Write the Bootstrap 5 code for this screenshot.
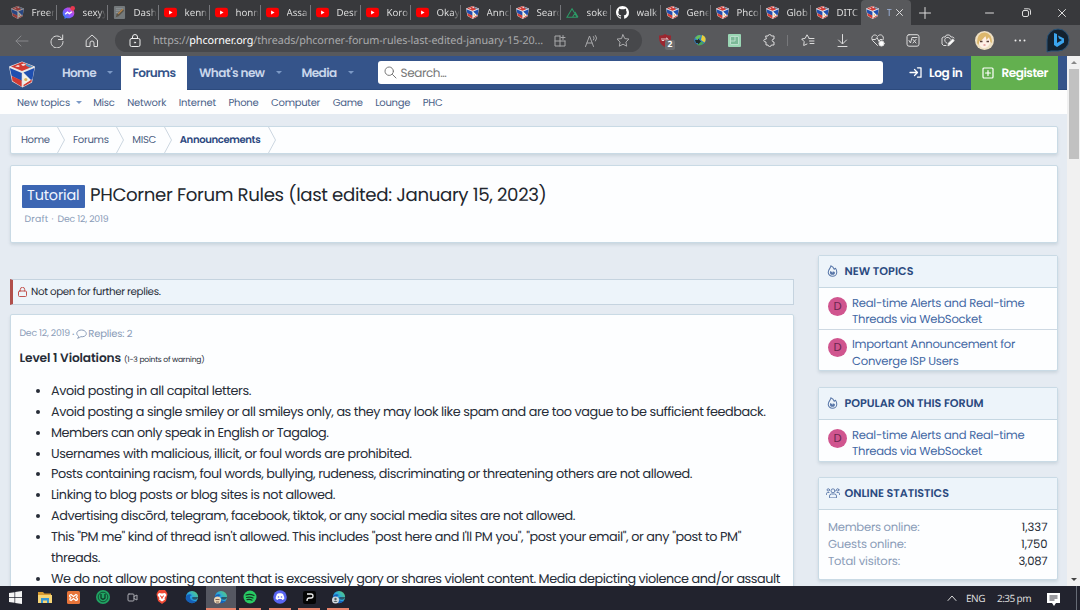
<!DOCTYPE html>
<html lang="en">
<head>
<meta charset="utf-8">
<title>PHCorner Forum Rules</title>
<meta name="viewport" content="width=device-width, initial-scale=1">
<link href="https://cdn.jsdelivr.net/npm/bootstrap@5.3.0/dist/css/bootstrap.min.css" rel="stylesheet">
<style>
html,body{height:100%;overflow:hidden}
body{font-family:Poppins,Inter,"Open Sans",sans-serif;font-feature-settings:"cv11";font-size:11px;line-height:16px;color:#272d38;background:#e5ebf2;text-rendering:geometricPrecision}
svg{display:block;flex:none}
.stroke{fill:none;stroke:currentColor;stroke-linecap:round;stroke-linejoin:round}
[data-w]{white-space:nowrap;display:inline-block}
.desk{height:610px}
/* browser chrome */
.chrome{font-family:"Segoe UI","Noto Sans","Open Sans",sans-serif;font-feature-settings:normal;color:#dcdcdc}
.tabstrip{height:25px;background:#38393c;padding-left:5.5px}
.btab{width:50px;height:25px;position:relative;padding-left:5px}
.btab.w51{width:51px}
.btab svg{width:13px;height:13px}
.btab .ttl{margin-left:8px;width:24px;white-space:nowrap;font-size:9.7px;line-height:20px;-webkit-mask-image:linear-gradient(90deg,#000 65%,transparent 95%);mask-image:linear-gradient(90deg,#000 65%,transparent 95%)}
.btab::after{content:"";position:absolute;right:0;top:5px;height:15px;width:1px;background:#75767a}
.btab.live{background:#58595c;border-radius:4px 4px 0 0}
.btab.live::after,.btab.noline::after{display:none}
.btab.live .ttl{width:6px;color:#9bb0d8}
.toolbar{height:31px;background:#58595c;padding-left:4.5px;padding-bottom:0}
.slot{width:35px;display:flex;justify-content:center;flex:none;position:relative}
.slot.s31{width:31.5px;color:#a9a9ab}
.urlbox{width:527px;height:23px;border-radius:12px;background:#47484b;margin-left:5.5px;margin-right:5px;color:#a9aaac;font-size:10.8px}
.urlbox b{color:#fff;font-weight:400}
.cnt{position:absolute;left:18px;top:6px;width:10px;height:10px;background:#6c6d70;border-radius:2px;font-size:8.5px;line-height:10px;text-align:center;color:#fff;font-weight:700}
/* site */
.site{width:1067px}
.sitenav{height:34px;background:#35548a;color:#c9d6ea;font-weight:600;font-size:12.1px;border-bottom:1px solid #2c4a7d}
.sitenav span{padding-top:2px}
.caret{width:0;height:0;border:3px solid transparent;border-top:3.5px solid #7c99c6;border-bottom:0;flex:none}
.navon{background:#fff;color:#35548a;height:34px;width:66px;margin-left:8px}
.find{width:505px;height:23px;background:#fff;border-radius:3px;color:#777;font-weight:400;font-size:12px;padding-left:5.5px;margin-left:24.5px}
.reg{background:#63b04f;color:#fff;height:34px;width:87px;margin-left:8.5px;padding-left:11px}
.subnav{height:24px;background:#fefefe;color:#4a6188;font-size:10px;padding-left:17px;padding-top:1px;gap:12.6px}
.sheet{background:#fdfeff;border:1px solid #c9dae5;border-radius:2px;box-shadow:0 2px 3px rgba(90,110,130,.17)}
.crumbs{margin:12px 9px 0 9.5px;height:28px;font-size:10.1px;color:#4a5c80}
.crumbs svg{margin:0 7.8px}
.titlebox{margin:11px 9px 0 9.5px;height:78px;padding:18px 12px 0 11.5px}
.titlebox h1{font-size:18.2px;line-height:24px;font-weight:400;margin:0;color:#22272e}
.tutorial{background:#3c66b3;color:#f0f5ff;font-size:14.4px;line-height:23px;height:23px;padding:0 5px;margin-right:5px;border-radius:1px;margin-top:1px;width:63px}
.dim{color:#8a9cb8}
.notice{height:26px;background:#edf4fa;border:1px solid #c5d3df;border-left:3px solid #b1504c;font-size:10.3px;padding-left:5.5px;margin-top:36px}
.post{margin-top:9px;height:300px;padding:10.5px 9px}
.rules{font-size:12.8px;line-height:20.85px;padding-left:31.5px;margin:14px 0 0}
.rules li::marker{font-size:12px}
.rules span{vertical-align:top}
.maincol{width:784.5px;margin-left:9.5px}
.aside-col{width:240px;margin-left:24px;padding-top:12px}
.hd{height:32px;background:#edf4fa;border-bottom:1px solid #c6d7e2;color:#2b4a80;font-weight:600;font-size:11.2px;padding-left:8px;padding-bottom:1px}
.hd svg{color:#5876a8}
.topic{height:41px;padding:6.5px 0 0 9px;color:#4468a4;font-size:11.6px;line-height:16.6px}
.topic>div{padding-top:1px}
.topic+.topic{border-top:1px solid #ced9e3;padding-top:6px}
.topic span[data-w]{vertical-align:top}
.ava{width:19px;height:19px;border-radius:50%;background:#d0558f;color:#6a2750;font-size:11.5px;line-height:20px;text-align:center;margin:2px 5px 0 0;flex:none}
.stat{font-size:11.6px;line-height:16.9px}
.scroller{width:13px;background:#f1f1f1}
.thumb{height:90px;width:10px;background:#c1c1c1}
/* taskbar */
.task{height:24px;background:#22232e;padding-left:.5px}
.app{width:29.4px;height:24px;display:flex;align-items:center;justify-content:center;border-bottom:2px solid transparent;flex:none}
.app.run{background:linear-gradient(#e8836b,#e8836b) center 22px/22px 2px no-repeat border-box}
.app.now{background:#555761;border-bottom-color:#e8836b}
</style>
</head>
<body>
<svg width="0" height="0" class="position-absolute">
<defs>
<linearGradient id="msg" x1="0" y1="1" x2="1" y2="0"><stop offset="0" stop-color="#1a8cff"/><stop offset=".6" stop-color="#a24bfa"/><stop offset="1" stop-color="#ff5c7a"/></linearGradient>
<linearGradient id="edg" x1="0" y1="1" x2="1" y2="0"><stop offset="0" stop-color="#1259b8"/><stop offset=".5" stop-color="#2aa7e0"/><stop offset="1" stop-color="#5fd36a"/></linearGradient>
</defs>
<symbol id="cube" viewBox="0 0 26 26"><path fill="#e9e6e6" d="M0 5 13 0l13 5-3 16-9.500 5L3 20z"/><path fill="#d23a33" d="m2 5 11-4.500L24 5 13 9.500z"/><path fill="#f1e4e4" d="m6 5 3-1.500 2 1-1.500 1zM12 3l3-1 2 1.300-3 1.200z"/><path fill="#4a9ccc" d="m17 2.200 7 2.800-3 1.200-4-2z"/><path fill="#1f4fb0" d="m.8 6.500 12 5-.1 8L2.700 14.500z"/><path fill="#d23a33" d="M2.700 14.500 12.700 19v6.200L3.500 19.500z"/><path fill="#1f4fb0" d="M25.300 6.500 14.500 11l7.500 7.500 1.500-1z"/><path fill="#d23a33" d="m22.800 18-.3 2.500-8 4.500v-2z"/><path fill="#f3f0e8" d="M14.300 12 21.500 18.500l-7.200 5z"/><circle cx="16.800" cy="18" r="1.600" fill="#d9b15a"/></symbol>
<symbol id="yt" viewBox="0 0 14 14"><rect y="2" width="14" height="10" rx="2.500" fill="#f00"/><path fill="#fff" d="M5.500 4.800v4.400L9.200 7z"/></symbol>
<symbol id="msgr" viewBox="0 0 14 14"><path fill="url(#msg)" d="M7 1.500c-3.800 0-6.300 2.600-6.300 6 0 2 .8 3.400 2 4.400V14l2-1.100c4.800 1.200 8.600-1.700 8.600-5.400 0-3.400-2.500-6-6.300-6z"/><path d="m3.500 9 2.400-2.400L8 8.200l2.600-2" stroke="#fff" stroke-width="1.500" fill="none"/><circle cx="11.500" cy="2.500" r="2.500" fill="#e8384f"/></symbol>
<symbol id="dash" viewBox="0 0 14 14"><rect x="1" width="12" height="14" rx="1" fill="#74797b"/><path d="M3 3h8M3 5h6M3 7h4" stroke="#989fa0" stroke-width=".8"/><path d="m3 12 1-3 6-6 2 2-6 6z" fill="#59544a"/><path d="m5 8 5-5 1 1-5 5z" fill="#b98548"/></symbol>
<symbol id="nuxt" viewBox="0 0 14 14"><path d="M1 12 6.500 3l5.500 9zM7 12l3-5 3 5" fill="none" stroke="#2c9a66" stroke-width="1.100"/></symbol>
<symbol id="gh" viewBox="0 0 16 16"><path fill="#fff" d="M8 0C3.580 0 0 3.580 0 8c0 3.540 2.290 6.530 5.470 7.590.4.070.55-.17.55-.38v-1.490c-2.010.37-2.530-.49-2.690-.94-.09-.23-.48-.94-.82-1.130-.28-.15-.68-.52-.01-.53.63-.01 1.080.58 1.230.82.72 1.210 1.870.87 2.330.66.070-.52.280-.87.510-1.070-1.780-.2-3.640-.89-3.640-3.950 0-.87.310-1.590.820-2.150-.08-.2-.36-1.020.08-2.120 0 0 .67-.21 2.200.82a7.600 7.600 0 0 1 4 0c1.530-1.040 2.200-.82 2.200-.82.440 1.100.160 1.920.080 2.120.51.560.820 1.270.820 2.150 0 3.070-1.870 3.750-3.650 3.950.29.250.54.730.54 1.480v2.200c0 .21.150.46.550.38A8 8 0 0 0 16 8c0-4.420-3.580-8-8-8z"/></symbol>
<symbol id="edge" viewBox="0 0 16 16"><circle cx="8" cy="8" r="7" fill="url(#edg)"/><path d="M1 8c1-3 5-4 7-2-2 0-3 2-2 4s4 3.500 7.500 2c-2 3.500-7 4-10 1.500S.6 10 1 8z" fill="#1560b8"/><path d="M8.500 8c-1 1.200 0 3.200 3 3.200 1.500 0 3-1.200 3.500-3.200H10z" fill="#22232e" opacity=".6"/></symbol>
<symbol id="flame" viewBox="0 0 12 14"><path class="stroke" stroke-width="1.200" d="M4 1C4.500 3 1 5 1 8.500a5 4.700 0 0 0 10 0C11 6.500 10.500 5 9.500 3.800L8 5C7.500 3.500 5.500 1.500 4 1z"/><path fill="currentColor" d="M6 11.500a3 2.800 0 0 1-3-3q0-1 1-1.500l2 2 .5-2L8 8.500l.7-1q.8 4-2.700 4z"/></symbol>
</svg>
<div class="desk d-flex flex-column overflow-hidden">
<div class="chrome">
<div class="tabstrip d-flex">
<div class="btab w51 d-flex align-items-center"><svg opacity=".6"><use href="#cube"/></svg><span class="ttl">Freer</span></div>
<div class="btab w51 d-flex align-items-center"><svg><use href="#msgr"/></svg><span class="ttl">sexyy</span></div>
<div class="btab w51 d-flex align-items-center"><svg><use href="#dash"/></svg><span class="ttl">Dash</span></div>
<div class="btab w51 d-flex align-items-center"><svg><use href="#yt"/></svg><span class="ttl">kenn</span></div>
<div class="btab w51 d-flex align-items-center"><svg><use href="#yt"/></svg><span class="ttl">honn</span></div>
<div class="btab d-flex align-items-center"><svg><use href="#yt"/></svg><span class="ttl">Assa</span></div>
<div class="btab d-flex align-items-center"><svg><use href="#yt"/></svg><span class="ttl">Desr</span></div>
<div class="btab d-flex align-items-center"><svg><use href="#yt"/></svg><span class="ttl">Koro</span></div>
<div class="btab d-flex align-items-center"><svg><use href="#yt"/></svg><span class="ttl">Okay</span></div>
<div class="btab d-flex align-items-center"><svg><use href="#cube"/></svg><span class="ttl">Annc</span></div>
<div class="btab d-flex align-items-center"><svg><use href="#cube"/></svg><span class="ttl">Searc</span></div>
<div class="btab d-flex align-items-center"><svg><use href="#nuxt"/></svg><span class="ttl">soke</span></div>
<div class="btab d-flex align-items-center"><svg><use href="#gh"/></svg><span class="ttl">walk</span></div>
<div class="btab d-flex align-items-center"><svg><use href="#cube"/></svg><span class="ttl">Gene</span></div>
<div class="btab d-flex align-items-center"><svg><use href="#cube"/></svg><span class="ttl">Phco</span></div>
<div class="btab d-flex align-items-center"><svg><use href="#cube"/></svg><span class="ttl">Glob</span></div>
<div class="btab noline d-flex align-items-center"><svg><use href="#cube"/></svg><span class="ttl">DITC</span></div>
<div class="btab live d-flex align-items-center"><svg><use href="#cube"/></svg><span class="ttl">T</span><svg class="stroke" style="width:7px;height:7px;margin-left:3px" viewBox="0 0 7 7"><path d="m.5.5 6 6m0-6-6 6"/></svg></div>
<div class="d-flex align-items-center ps-2"><svg class="stroke" width="12" height="12" viewBox="0 0 12 12"><path d="M6 .5v11M.5 6h11"/></svg></div>
<div class="d-flex align-items-center ms-auto" style="gap:27.5px;padding-right:14px"><svg class="stroke" width="9" height="9" viewBox="0 0 9 9"><path d="M.5 5h8"/></svg><svg class="stroke" width="9" height="9" viewBox="0 0 9 9"><rect x=".5" y="2.500" width="6" height="6" rx="1.500"/><path d="M2.500.8h4a2 2 0 0 1 2 2v3.500"/></svg><svg class="stroke" width="8" height="8" viewBox="0 0 8 8"><path d="m.5.5 7 7m0-7-7 7"/></svg></div>
</div>
<div class="toolbar d-flex align-items-center">
<div class="slot" style="color:#87888b"><svg class="stroke" width="14" height="12" viewBox="0 0 14 12"><path d="M13 6H1m5-5L1 6l5 5"/></svg></div>
<div class="slot"><svg class="stroke" width="14" height="14" viewBox="0 0 14 14"><path d="M12.500 5.500a6 6 0 1 0 .5 2M12.700 1v4.500H8.500"/></svg></div>
<div class="slot"><svg class="stroke" width="14" height="14" viewBox="0 0 14 14"><path d="M1.500 6 7 1l5.500 5v6.500H9V9a2 2 0 0 0-4 0v3.500H1.500z"/></svg></div>
<div class="urlbox d-flex align-items-center"><div class="slot" style="width:38px;color:#eee;padding-left:1px"><svg class="stroke" width="12" height="14" viewBox="0 0 12 14"><rect x="1" y="4.500" width="10" height="8" rx="1.500"/><path d="M3.500 4.500V3a2.500 2.500 0 0 1 5 0v1.500"/><circle cx="6" cy="8.500" r=".6"/></svg></div><div class="flex-grow-1"><span data-w="390">https://<b>phcorner.org</b>/threads/phcorner-forum-rules-last-edited-january-15-20...</span></div>
<div class="slot s31"><svg class="stroke" width="12" height="12" viewBox="0 0 12 12"><path d="M6 1H1v10h10V6M1 6h10M6 1v10M9 .5v4M7 2.500h4"/></svg></div><div class="slot s31"><svg class="stroke" width="13" height="12" viewBox="0 0 13 12"><path d="M.5 11.500 4.500 1l4 10.500M2 8h5M8.500 1.500q1.500 1.500 0 3.500M10.500.5q2.500 2.500 0 5.500"/></svg></div><div class="slot s31" style="margin-right:3px"><svg class="stroke" width="14" height="13" viewBox="0 0 14 13"><path d="m7 .8 1.800 3.800 4.200.5-3.100 2.900.8 4.200L7 10.200l-3.700 2 .8-4.200L1 5.100l4.200-.5z"/></svg></div></div>
<div class="slot"><svg width="12" height="13" viewBox="0 0 12 13"><path fill="#9b2730" d="M6 0q3 2 6 1.500c0 6-1 9-6 11.500C1 10.500 0 7.500 0 1.500Q3 2 6 0z"/><path d="M3 4v2.500h2V4M7 4v2.500q2.500 0 2-1.300T7 4" fill="none" stroke="#eee" stroke-width=".8"/></svg><span class="cnt">2</span></div>
<div class="slot"><svg width="13" height="13" viewBox="0 0 13 13"><ellipse cx="7" cy="6" rx="5.800" ry="5" fill="#2f80c2"/><path d="M2 4Q6-1 8 2L5 6z" fill="#69c05a"/><path d="M9 1c4 1 4.500 5 2.500 7.500L8 6z" fill="#e8cf3c"/><path d="M4 11q4 1.500 7-2L7 7z" fill="#4aa65a"/><path d="M2 6h3V4.500L8 7.500 5 10.500V9H3z" fill="#202b2b"/></svg></div>
<div class="slot"><svg width="13" height="13" viewBox="0 0 13 13"><rect width="13" height="13" rx="1" fill="#9ad6b4"/><rect x="2" y="2" width="9" height="9" fill="#7cba98"/><path d="M2.500 2.500h8v8h-8zM7 3v4H3" fill="none" stroke="#cce9d9" stroke-width=".8"/></svg></div>
<div class="slot"><svg class="stroke" width="13" height="13" viewBox="0 0 13 13"><path d="M3 2h2q.3-1.500 1.700-1.500T8.400 2H11v3q-1.800 0-1.800 1.500T11 8v3H8.400q-.2 1.500-1.700 1.500T5 11H3V8Q.8 8 .8 6.500T3 5z"/></svg></div>
<div style="width:3px;height:11px;border-left:1px solid #77787b"></div>
<div class="slot"><svg class="stroke" width="14" height="13" viewBox="0 0 14 13"><path d="M8 4 6 .8 4.200 4.300.7 5l2.500 2.700-.5 3.800L6 10M8 4.500h5M8.500 7h4.500M9 9.500h4"/></svg></div>
<div class="slot"><svg class="stroke" width="11" height="13" viewBox="0 0 11 13"><path d="M5.500.5v9M1.500 6l4 4 4-4M1 12.500h9"/></svg></div>
<div class="slot"><svg class="stroke" width="14" height="13" viewBox="0 0 14 13"><path d="M6.500 11.500 1.500 6.500C-1 2 4-1 6.500 2.500 9-1 14 1.500 12 6M1.500 5.500h3L6 3.500l2 4 1-2h2"/><circle cx="10.500" cy="9.500" r="2.600" fill="#fff"/></svg></div>
<div class="slot"><svg class="stroke" width="14" height="13" viewBox="0 0 14 13"><rect x="1" y=".7" width="12" height="11.500" rx="2"/><path d="M3 6.500 4.500 9 6 3.500h5M7 5.500l3 3.500m0-3.500L7 9"/></svg></div>
<div class="slot"><svg class="stroke" width="14" height="13" viewBox="0 0 14 13"><path d="M5 11.500H2.500L1 10V4l1.500-1H4L5.500 1h3L10 3h1.500L13 4M9.500 5.200a3 3 0 1 0-3.500 4"/><path fill="#fff" d="m7 11.500.6-2.500 4-4 1.700 1.500-4 4z"/></svg></div>
<div class="slot" style="padding-left:2px;width:37px"><svg width="19" height="19" viewBox="0 0 19 19"><circle cx="9.500" cy="9.500" r="9.500" fill="#eee0c4"/><path d="M4 8q5-5 11 0v4q-2 5-6 5t-5-5z" fill="#fff0e7"/><path d="M2 12Q2 1 10 1.500q7 1 7 10.500l-1.500-1L14 6l-2.500 3-1-4-4 4.500-2 .5-1 4z" fill="#dcb76c"/><path d="M5 10.500h2.500M11.500 10.500H14" stroke="#5b3f38" stroke-width="1.600"/><path d="m8.500 14 2 0" stroke="#c66"/></svg></div>
<div class="slot"><svg width="12" height="3" fill="#eee"><circle cx="1.500" cy="1.500" r="1"/><circle cx="6" cy="1.500" r="1"/><circle cx="10.500" cy="1.500" r="1"/></svg></div>
<div class="slot" style="width:42px"><svg width="24" height="25" viewBox="0 0 24 25"><path d="M1 24V12a11 11 0 1 1 11 11H5z" fill="#14222f" stroke="#285378"/><path d="m8 5 3 1v9l5-3-3-1.500-1-3 6 3v4l-7 4.500L8 17z" fill="#3ba5ee"/></svg></div>
</div>
</div>
<div class="d-flex flex-grow-1 overflow-hidden">
<main class="site">
<nav class="sitenav d-flex align-items-center">
<svg width="26" height="27" style="margin:3px 0 0 9px"><use href="#cube"/></svg>
<span data-w="34" style="margin-left:27px">Home</span><i class="caret" style="margin-left:11px"></i>
<div class="navon d-flex align-items-center justify-content-center"><span data-w="43">Forums</span></div>
<span data-w="65.500" style="margin-left:12px">What's new</span><i class="caret" style="margin-left:11px"></i>
<span data-w="35" style="margin-left:20px">Media</span><i class="caret" style="margin-left:11px"></i>
<div class="find d-flex align-items-center"><svg class="stroke me-1" width="13" height="13" viewBox="0 0 13 13"><circle cx="5.200" cy="5.200" r="4.200"/><path d="m8.500 8.500 3.500 3.500"/></svg><span data-w="46">Search...</span></div>
<svg class="stroke text-white" width="13" height="11" viewBox="0 0 13 11" stroke-width="1.300" style="margin-left:26px"><path d="M1 5.500h7M5.500 2.500l3 3-3 3M8.500.8H12v9.400H8.500"/></svg><span data-w="33.500" class="text-white" style="margin-left:7px">Log in</span>
<div class="reg d-flex align-items-center"><svg class="stroke" width="12" height="12" viewBox="0 0 12 12" stroke-width="1.200"><rect x="1" y="1" width="10" height="10" rx="1"/><path d="M6 3.500v5M3.500 6h5"/></svg><span data-w="46.500" style="margin-left:7.5px">Register</span></div>
</nav>
<div class="subnav d-flex align-items-center"><span data-w="53">New topics</span><i class="caret" style="margin:0 -1.5px 0 -6.5px"></i><span data-w="21.500">Misc</span><span data-w="39">Network</span><span data-w="37">Internet</span><span data-w="30">Phone</span><span data-w="49">Computer</span><span data-w="30">Game</span><span data-w="35">Lounge</span><span data-w="19.500">PHC</span></div>
<div class="sheet crumbs d-flex align-items-center" style="padding-left:10.5px"><span data-w="28.500">Home</span><svg class="stroke" width="8" height="26" viewBox="0 0 8 26" style="color:#ccd6e0"><path d="m.5 0 7 13-7 13"/></svg><span data-w="35.500">Forums</span><svg class="stroke" width="8" height="26" viewBox="0 0 8 26" style="color:#ccd6e0"><path d="m.5 0 7 13-7 13"/></svg><span data-w="24">MISC</span><svg class="stroke" width="8" height="26" viewBox="0 0 8 26" style="color:#ccd6e0"><path d="m.5 0 7 13-7 13"/></svg><b data-w="80.500" class="fw-semibold" style="color:#2c4880">Announcements</b><svg class="stroke" width="8" height="26" viewBox="0 0 8 26" style="color:#ccd6e0"><path d="m.5 0 7 13-7 13"/></svg></div>
<header class="sheet titlebox"><h1 class="d-flex"><span class="tutorial"><span data-w="52.500">Tutorial</span></span><span data-w="456.500">PHCorner Forum Rules (last edited: January 15, 2023)</span></h1><div class="dim d-flex" style="font-size:9.3px;padding-left:2.5px;margin-top:4px"><span data-w="24">Draft</span><span style="margin:0 4px 0 3px">·</span><span data-w="51">Dec 12, 2019</span></div></header>
<div class="d-flex">
<section class="maincol">
<div class="notice d-flex align-items-center"><svg class="stroke" width="9" height="10" viewBox="0 0 9 10" style="color:#c25450;margin-right:4px"><rect x=".5" y="4" width="8" height="5.500" rx="1"/><path d="M2.300 4V2.500a2.200 2.200 0 0 1 4.400 0V4"/></svg><span data-w="129.500">Not open for further replies.</span></div>
<article class="sheet post">
<div class="dim d-flex align-items-center"><span data-w="50.500" style="font-size:9.3px">Dec 12, 2019</span><span style="margin:0 2px">·</span><svg class="stroke" width="11" height="10" viewBox="0 0 11 10"><path d="M2 9Q3 8 2.700 7.400C-1 5 1 1 5.500 1s6.500 4.500 3 6.200Q7 8 4.800 7.700 3.500 9 2 9z"/></svg><span data-w="44" style="font-size:10px;margin-left:1px">Replies: 2</span></div>
<div class="d-flex align-items-baseline" style="margin-top:9.5px"><b data-w="101.500" class="fw-semibold" style="font-size:12.2px">Level 1 Violations</b><small data-w="80.500" style="font-size:7.600px;margin-left:3px">(1-3 points of warning)</small></div>
<ul class="rules">
<li><span data-w="200">Avoid posting in all capital letters.</span></li>
<li><span data-w="714.500">Avoid posting a single smiley or all smileys only, as they may look like spam and are too vague to be sufficient feedback.</span></li>
<li><span data-w="277.500">Members can only speak in English or Tagalog.</span></li>
<li><span data-w="360.500">Usernames with malicious, illicit, or foul words are prohibited.</span></li>
<li><span data-w="641">Posts containing racism, foul words, bullying, rudeness, discriminating or threatening others are not allowed.</span></li>
<li><span data-w="284">Linking to blog posts or blog sites is not allowed.</span></li>
<li><span data-w="524">Advertising discōrd, telegram, facebook, tiktok, or any social media sites are not allowed.</span></li>
<li><span data-w="690">This "PM me" kind of thread isn't allowed. This includes "post here and I'll PM you", "post your email", or any "post to PM"</span><br><span data-w="49">threads.</span></li>
<li><span data-w="729">We do not allow posting content that is excessively gory or shares violent content. Media depicting violence and/or assault</span></li>
</ul>
</article>
</section>
<aside class="aside-col">
<div class="sheet" style="height:116px"><div class="hd d-flex align-items-center"><svg width="11" height="12"><use href="#flame"/></svg><span data-w="69" style="margin-left:6.5px">NEW TOPICS</span></div>
<div class="topic d-flex"><span class="ava">D</span><div><span data-w="172.500">Real-time Alerts and Real-time</span><br><span data-w="130">Threads via WebSocket</span></div></div>
<div class="topic d-flex"><span class="ava">D</span><div><span data-w="163">Important Announcement for</span><br><span data-w="106.500">Converge ISP Users</span></div></div></div>
<div class="sheet" style="height:75px;margin-top:16px"><div class="hd d-flex align-items-center"><svg width="11" height="12"><use href="#flame"/></svg><span data-w="139" style="margin-left:6.5px">POPULAR ON THIS FORUM</span></div>
<div class="topic d-flex"><span class="ava">D</span><div><span data-w="172.500">Real-time Alerts and Real-time</span><br><span data-w="130">Threads via WebSocket</span></div></div></div>
<div class="sheet" style="height:103px;margin-top:15px"><div class="hd d-flex align-items-center" style="padding-left:7px"><svg class="stroke" width="14" height="10" viewBox="0 0 14 10" stroke-width=".9"><circle cx="7" cy="2.800" r="2"/><circle cx="2.300" cy="1.900" r="1.200"/><circle cx="11.700" cy="1.900" r="1.200"/><path d="M3.500 9.500V8q0-2 2-2h3q2 0 2 2v1.500zM.5 6.500V5.700q0-1.200 1.200-1.200H3M13.500 6.500V5.700q0-1.200-1.200-1.200H11"/></svg><span data-w="104.500" style="margin-left:4.500px">ONLINE STATISTICS</span></div>
<div class="stat" style="padding:10px 9.5px 0 9px"><div class="d-flex justify-content-between"><span class="dim" data-w="91.500">Members online:</span><span data-w="26">1,337</span></div><div class="d-flex justify-content-between"><span class="dim" data-w="78">Guests online:</span><span data-w="26.500">1,750</span></div><div class="d-flex justify-content-between"><span class="dim" data-w="72">Total visitors:</span><span data-w="29">3,087</span></div></div></div>
</aside>
</div>
</main>
<div class="scroller d-flex flex-column align-items-center"><i class="caret" style="border-top:0;border-bottom:3.5px solid #888;margin:5px 0"></i><div class="thumb"></div><i class="caret mt-auto" style="border-top-color:#444;margin-bottom:5px"></i></div>
</div>
<footer class="task chrome d-flex align-items-center flex-shrink-0">
<div class="app"><svg width="13" height="13" viewBox="0 0 13 13" fill="#f4f4f4"><path d="m0 2 5.500-.8V6H0zM6.200 1 13 0v6H6.200zM0 6.800h5.500v5L0 11zM6.200 6.800H13V13l-6.800-1z"/></svg></div>
<div class="app"><svg width="14" height="12" viewBox="0 0 14 12"><path fill="#d79a31" d="M0 1h5l1.500 1.500H13V5H0z"/><path fill="#f7d575" d="M0 4h14v8H0z"/><path fill="#3898d6" d="M3 12V7h8v5H9V9.500H5V12z"/></svg></div>
<div class="app"><svg width="13" height="13" viewBox="0 0 13 13"><rect width="13" height="13" rx="1.500" fill="#e77439"/><path d="M4 3.500c-3 1-.5 3 0 3s-3 2 0 3l2.500-2L9 9.500c3-1 .5-3 0-3s3-2 0-3l-2.500 2z" fill="none" stroke="#fff" stroke-width="1.200"/></svg></div>
<div class="app"><svg width="14" height="14" viewBox="0 0 14 14"><circle cx="7" cy="7" r="7" fill="#20a463"/><circle cx="7" cy="7" r="4.800" fill="none" stroke="#144e34"/><path d="M5 4v4q2 2.500 4 0V4" fill="none" stroke="#0d3c28" stroke-width="1.300"/></svg></div>
<div class="app" style="color:#a9aab0"><svg class="stroke" width="11" height="9" viewBox="0 0 11 9"><rect x="1" y="1" width="6" height="7" rx="1"/><path d="m7 3.500 3-1.500v5L7 5.500"/></svg></div>
<div class="app"><svg width="12" height="14" viewBox="0 0 12 14"><path fill="#f04a35" d="m3 0h6l1.500 2 1 2-1.500 7-4 3-4-3L.5 4l1-2z"/><path fill="#fff" d="m3 3 3 .5L9 3l1.500 2-2 3 .5 1.500L6 11.500 3 9.500 3.500 8l-2-3z"/><path d="M4 6h1l1 2.500L7 6h1" stroke="#f04a35" fill="none"/></svg></div>
<div class="app"><svg width="14" height="14"><use href="#edge"/></svg></div>
<div class="app now"><svg width="15" height="14" viewBox="0 0 15 14"><use href="#edge" x="1" width="14" height="14"/><circle cx="4.500" cy="10" r="3.500" fill="#ead6b6"/><path d="M2.500 9.500h4M3 12h3" stroke="#806455"/></svg></div>
<div class="app run"><svg width="14" height="14" viewBox="0 0 14 14"><circle cx="7" cy="7" r="6.500" fill="#28cb64"/><path d="M3 5q4-1.500 8 .5M3.500 7.500q3.500-1 6.500.5M4 9.700q3-.7 5 .5" class="stroke" style="color:#143b23" stroke-width="1.200"/></svg></div>
<div class="app run"><svg width="14" height="14" viewBox="0 0 14 14"><circle cx="7" cy="7" r="6.800" fill="#5865f2"/><path fill="#fff" d="m4 4 1.800-.7h2.400L10 4q1.500 3 1.300 5l-2 1-.8-1h-3l-.8 1-2-1Q2.500 7 4 4z"/><circle cx="5.500" cy="7" r=".8" fill="#5865f2"/><circle cx="8.500" cy="7" r=".8" fill="#5865f2"/></svg></div>
<div class="app run"><svg width="13" height="13" viewBox="0 0 13 13"><rect width="13" height="13" rx="2" fill="#050505"/><path d="M4 3h4q2 0 2 2T8 7H6q-2 0-2 3" fill="none" stroke="#eee" stroke-width="1.300"/></svg></div>
<div class="app run"><svg width="15" height="14" viewBox="0 0 15 14"><use href="#edge" x="1" width="14" height="14"/><circle cx="4.500" cy="10" r="3.500" fill="#d1d8df"/><circle cx="4.500" cy="9" r="1.200" fill="#566"/><path d="M2.500 12q2-2.500 4 0z" fill="#566"/></svg></div>
<svg class="stroke ms-auto" width="10" height="6" viewBox="0 0 10 6"><path d="m1 5.500 4-4.500 4 4.500"/></svg><span data-w="19" style="margin-left:9px;font-size:10px">ENG</span><span data-w="34" style="margin-left:12px;font-size:10px">2:35 pm</span><svg width="13" height="13" viewBox="0 0 13 13" style="margin:2px 16px 0"><path fill="#fff" d="M0 0h13v10H9l-2 3-2-3H0z"/><path d="M2.500 3h8M2.500 5h8M2.500 7h5" stroke="#22232e" stroke-width=".9"/></svg><i style="border-left:1px solid #666b75;height:24px;margin-right:3px"></i>
</footer>
</div>
<script src="https://cdn.jsdelivr.net/npm/bootstrap@5.3.0/dist/js/bootstrap.bundle.min.js"></script>
<script>
// Track each label to its set measure, whichever font of the stack is in use.
document.querySelectorAll('[data-w]').forEach(el => {
  const gap = (parseFloat(el.dataset.w) - el.getBoundingClientRect().width) / el.textContent.length;
  el.style.letterSpacing = gap.toFixed(3) + 'px';
});
</script>
</body>
</html>
